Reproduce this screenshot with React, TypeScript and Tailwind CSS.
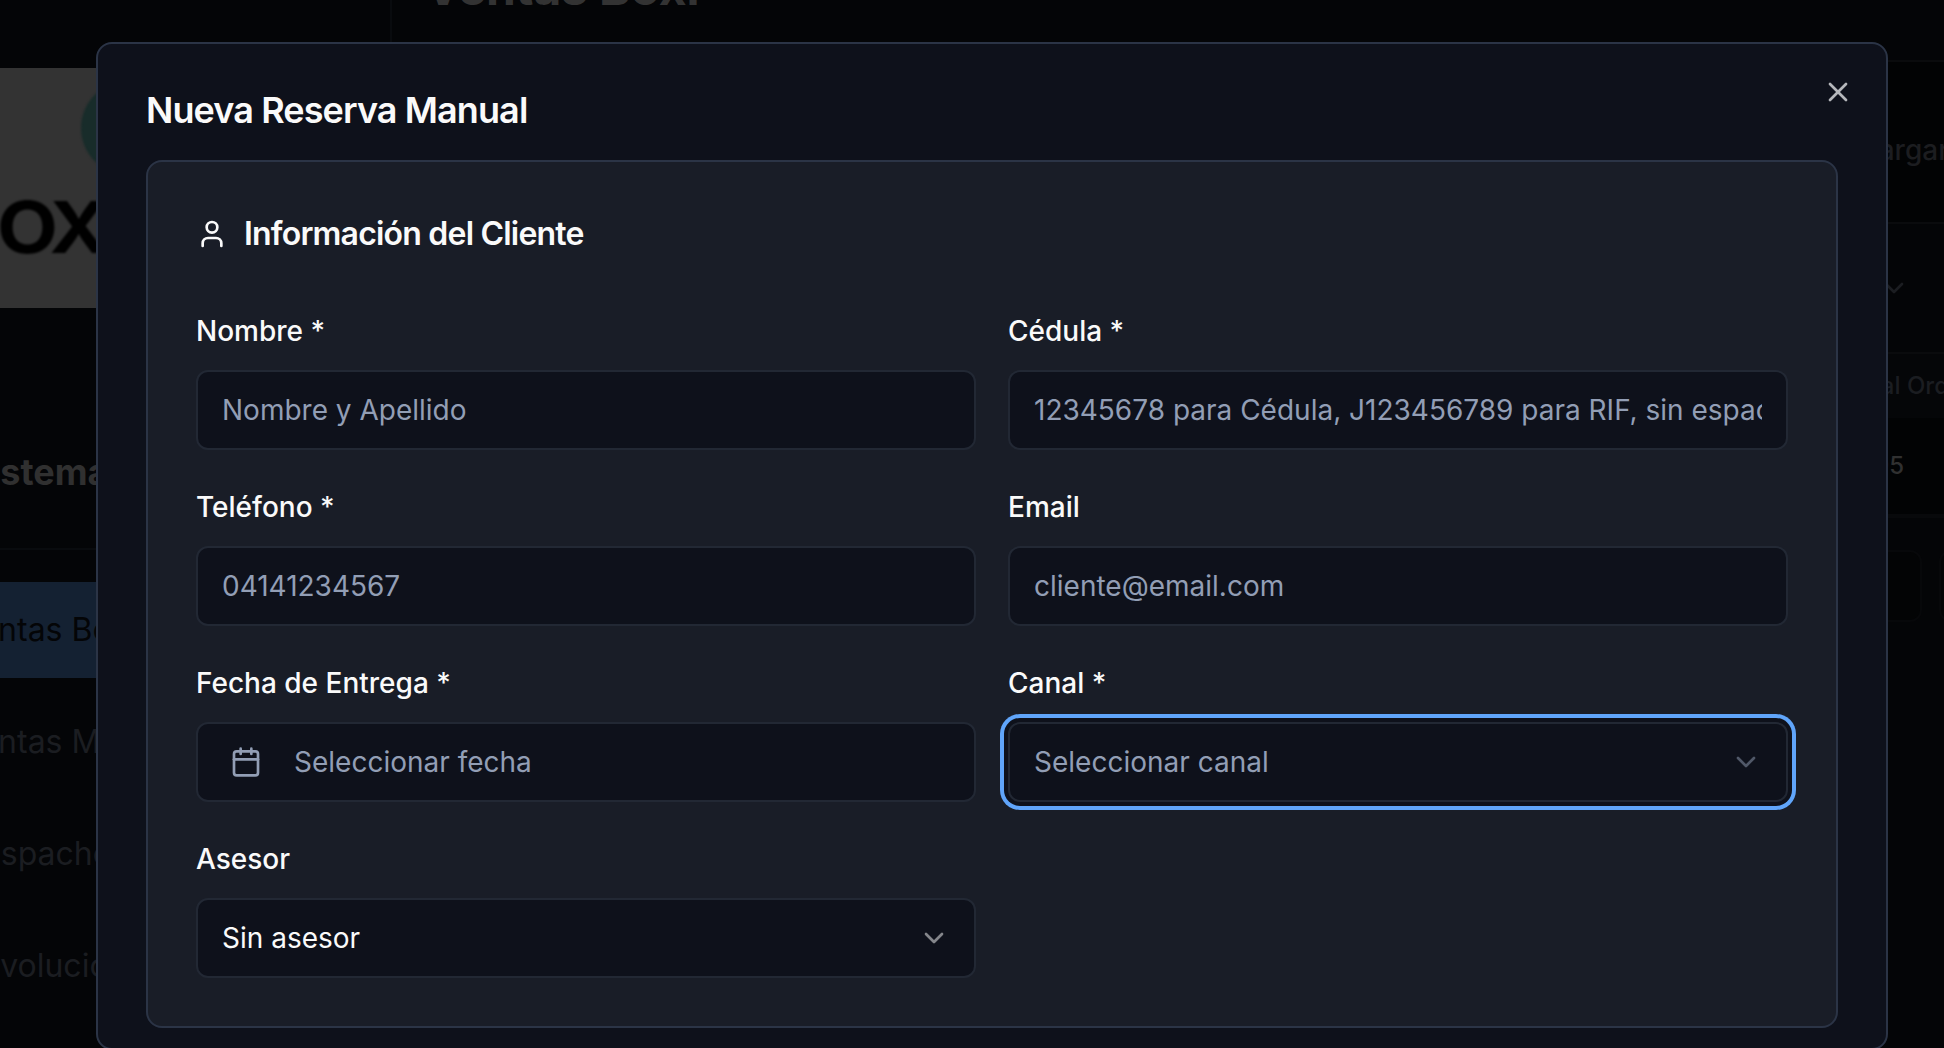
import type { ReactNode } from "react";
import { Calendar, ChevronDown, User, X } from "lucide-react";

const box = "flex h-20 w-full items-center rounded-[12px] border-2 border-[#222834] bg-[#0e111b] text-[28px]";

function Field({ label, children }: { label: string; children: ReactNode }) {
  return (
    <div className="flex flex-col gap-4">
      <label className="h-12 pt-px text-[28px] leading-[48px] font-medium text-[#fafafa]">{label}</label>
      {children}
    </div>
  );
}

function Input({ placeholder }: { placeholder: string }) {
  return (
    <input
      placeholder={placeholder}
      className={`${box} px-6 outline-none placeholder:text-[#929eb5]`}
    />
  );
}

function Sidebar() {
  const links = ["Ventas M", "Despacho", "Devolucio"];
  return (
    <aside className="flex h-full w-[392px] shrink-0 flex-col overflow-hidden border-r-2 border-[#090b0e] pt-[68px]">
      <div className="relative h-60 w-full overflow-hidden bg-[#333333]">
        <div className="absolute top-[13px] left-[81px] h-[94px] w-[94px] rounded-full bg-[#182c2a] blur-[1px]" />
        <div className="absolute top-[123px] left-[-3px] origin-left scale-x-[1.1] text-[72px] leading-none font-bold tracking-[-4px] text-black blur-[1px]">
          OX
        </div>
      </div>
      <div className="flex h-[242px] items-end border-b-2 border-[#090b0e] pb-[54px]">
        <span className="ml-[-33px] text-[36px] leading-[44px] font-bold text-[#303030]">Sistema</span>
      </div>
      <nav className="flex flex-col gap-4 pt-8 text-[32px] text-[#1b1d21]">
        <div className="flex h-24 items-center bg-[#142132] text-[#040507]">
          <span className="ml-[-41px]">Ventas Box</span>
        </div>
        {links.map((l) => (
          <div key={l} className="flex h-24 items-center">
            <span className="ml-[-41px]">{l}</span>
          </div>
        ))}
      </nav>
    </aside>
  );
}

function Backdrop() {
  return (
    <div className="flex h-full w-full">
      <Sidebar />
      <main className="flex min-w-0 flex-1 flex-col">
        <header className="flex h-[62px] items-start border-b-2 border-[#0a0b0d] pl-[33px]">
          <h1 className="-mt-[40px] text-[48px] leading-[56px] font-bold tracking-[-0.2px] text-[#333333]">
            Ventas Boxi
          </h1>
        </header>
        <div className="flex h-[162px] items-center justify-end border-b-2 border-[#0a0b0d] bg-[#020304] text-[28px] font-medium text-[#1c1d20]">
          <span className="-mr-[5px] pt-4">Cargar</span>
        </div>
        <div className="flex h-[128px] items-center justify-end pr-[34px] text-[#1b1d21]">
          <ChevronDown size={32} />
        </div>
        <div className="flex h-[66px] items-center justify-end border-t-2 border-[#0a0b0d] bg-[#050608] text-[24px] font-medium text-[#1b1d21]">
          <span className="-mr-[5px]">Total Ord</span>
        </div>
        <div className="flex h-[100px] items-center justify-end border-b-4 border-[#08090b] bg-[#020304] pr-[40px] text-[24px] font-medium text-[#303030]">
          $95
        </div>
        <div className="flex justify-end gap-[17px] pt-8">
          <div className="h-[72px] w-[180px] rounded-xl border-2 border-[#07080a] bg-[#030405]" />
          <div className="-mr-[15px] h-[72px] w-5 rounded-l-xl border-2 border-[#07080a] bg-[#030405]" />
        </div>
      </main>
    </div>
  );
}

export default function App() {
  return (
    <div className="relative h-[1048px] w-[1944px] overflow-hidden bg-[#040507] font-['Inter',sans-serif]">
      <Backdrop />
      <div className="absolute top-[42px] left-24 flex h-[1008px] w-[1792px] flex-col rounded-[16px] border-2 border-[#2b3446] bg-[#0e111b] px-12 pt-12">
        <h2 className="h-[68px] text-[36px] leading-[36px] font-semibold tracking-[-0.9px] text-[#fafafa]">
          Nueva Reserva Manual
        </h2>
        <button className="absolute top-8 right-8 text-[#b5b7bb]" aria-label="Cerrar">
          <X size={32} />
        </button>
        <section className="h-[868px] shrink-0 rounded-[16px] border-2 border-[#2b3446] bg-[#191d27] p-12">
          <h3 className="mb-12 flex h-12 items-center gap-4 text-[32px] leading-[48px] font-semibold tracking-[-0.8px] text-[#fafafa]">
            <User size={32} />
            Información del Cliente
          </h3>
          <div className="grid grid-cols-2 gap-8">
            <Field label="Nombre *">
              <Input placeholder="Nombre y Apellido" />
            </Field>
            <Field label="Cédula *">
              <Input placeholder="12345678 para Cédula, J123456789 para RIF, sin espacios" />
            </Field>
            <Field label="Teléfono *">
              <Input placeholder="04141234567" />
            </Field>
            <Field label="Email">
              <Input placeholder="cliente@email.com" />
            </Field>
            <Field label="Fecha de Entrega *">
              <button className={`${box} gap-8 px-8 text-[#929eb5]`}>
                <Calendar size={32} />
                Seleccionar fecha
              </button>
            </Field>
            <Field label="Canal *">
              <button className={`${box} justify-between px-6 text-[#929eb5] ring-4 ring-[#60a5fa] ring-offset-4 ring-offset-[#0e111b]`}>
                Seleccionar canal
                <ChevronDown size={32} className="opacity-50" />
              </button>
            </Field>
            <Field label="Asesor">
              <button className={`${box} justify-between px-6 text-[#fafafa]`}>
                Sin asesor
                <ChevronDown size={32} className="opacity-50" />
              </button>
            </Field>
          </div>
        </section>
      </div>
    </div>
  );
}
